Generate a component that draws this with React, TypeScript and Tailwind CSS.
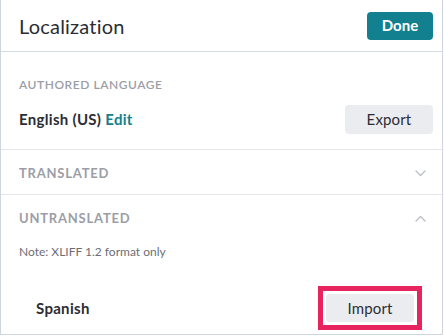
const font = { fontFamily: 'Lato, "Noto Sans", sans-serif' }

function Chevron({ up }: { up?: boolean }) {
  return (
    <svg width="11" height="7" viewBox="0 0 11 7" fill="none" stroke="#b9bcc3" strokeWidth="1.2" strokeLinecap="round" strokeLinejoin="round">
      {up ? <polyline points="1,6 5.5,1.5 10,6" /> : <polyline points="1,1 5.5,5.5 10,1" />}
    </svg>
  )
}

export default function App() {
  return (
    <div className="w-[443px] h-[335px] bg-white border-x border-b border-[#cdd5df] overflow-hidden text-[#2b2d33]" style={font}>
      {/* header */}
      <div className="h-[52px] flex items-center justify-between pl-[18px] pr-[9px] border-b border-[#d5dbe3]">
        <h1 className="text-[20px] leading-none tracking-[0.01em] text-[#2b2d33]">Localization</h1>
        <button className="w-[66px] h-[28px] rounded-[4px] bg-[#13808f] text-white text-[15px] font-bold">Done</button>
      </div>

      {/* authored language */}
      <div className="h-[98px] pl-[18px] pr-[9px] pt-[27px] border-b border-[#e3e6eb]">
        <div className="text-[12px] leading-none tracking-[0.045em] text-[#9b9ea6] font-semibold">AUTHORED LANGUAGE</div>
        <div className="mt-[14px] flex items-center justify-between">
          <div className="text-[15px] font-bold tracking-[0.02em]">
            English (US) <span className="text-[#13808f]">Edit</span>
          </div>
          <button className="w-[88px] h-[29px] rounded-[4px] bg-[#ebecf0] text-[15px] tracking-[0.01em] text-[#2b2d33]">Export</button>
        </div>
      </div>

      {/* translated */}
      <div className="h-[45px] flex items-center justify-between pt-[3px] pl-[18px] pr-[16px] border-b border-[#e3e6eb]">
        <span className="text-[13px] font-bold tracking-[0.06em] text-[#9b9ea6]">TRANSLATED</span>
        <Chevron />
      </div>

      {/* untranslated */}
      <div className="h-[44px] flex items-center justify-between pt-[3px] pl-[18px] pr-[16px]">
        <span className="text-[13px] font-bold tracking-[0.06em] text-[#9b9ea6]">UNTRANSLATED</span>
        <Chevron up />
      </div>
      <div className="mt-[4px] pl-[18px] text-[12px] leading-[18px] text-[#6b6e76]">Note: XLIFF 1.2 format only</div>

      <div className="mt-[25px] flex items-center justify-between pl-[35px] pr-[20px]">
        <span className="text-[15px] font-bold tracking-[0.02em]">Spanish</span>
        <div className="border-[5px] border-[#e8245f] p-[3px]">
          <button className="w-[88px] h-[28px] rounded-[4px] bg-[#ebecf0] text-[15px] tracking-[0.01em] text-[#2b2d33]">Import</button>
        </div>
      </div>
    </div>
  )
}
